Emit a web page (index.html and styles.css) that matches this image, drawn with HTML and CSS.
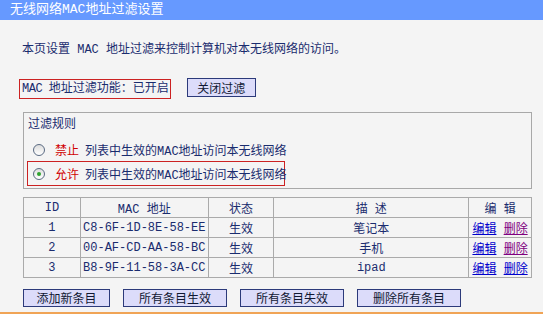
FILE: index.html
```html
<!DOCTYPE html>
<html lang="zh-CN">
<head>
  <meta charset="UTF-8">
  <title>无线网络MAC地址过滤设置</title>
  <link rel="stylesheet" href="styles.css">
</head>
<body>

  <!-- Title bar -->
  <div class="title">无线网络MAC地址过滤设置</div>

  <div class="content">
    <p class="intro">本页设置 MAC 地址过滤来控制计算机对本无线网络的访问。</p>

    <!-- Filter status -->
    <div class="status-row">
      <span class="status"><span class="latin">MAC </span>地址过滤功能：已开启</span>
      <button class="btn btn-toggle">关闭过滤</button>
    </div>

    <!-- Filter rules -->
    <div class="rules">
      <div class="rules-title">过滤规则</div>
      <div class="rule">
        <span class="radio"></span>
        <span class="rule-key">禁止</span>
        <span>列表中生效的MAC地址访问本无线网络</span>
      </div>
      <div class="rule rule-on">
        <span class="radio checked"></span>
        <span class="rule-key">允许</span>
        <span>列表中生效的MAC地址访问本无线网络</span>
      </div>
    </div>

    <!-- MAC list -->
    <table class="mac-table">
      <tr>
        <th class="col-id">ID</th>
        <th class="col-mac">MAC 地址</th>
        <th class="col-state">状态</th>
        <th class="col-desc">描 述</th>
        <th class="col-edit">编 辑</th>
      </tr>
      <tr>
        <td>1</td>
        <td>C8-6F-1D-8E-58-EE</td>
        <td>生效</td>
        <td>笔记本</td>
        <td><a href="#" class="link">编辑</a> <a href="#" class="link visited">删除</a></td>
      </tr>
      <tr>
        <td>2</td>
        <td>00-AF-CD-AA-58-BC</td>
        <td>生效</td>
        <td>手机</td>
        <td><a href="#" class="link">编辑</a> <a href="#" class="link visited">删除</a></td>
      </tr>
      <tr>
        <td>3</td>
        <td>B8-9F-11-58-3A-CC</td>
        <td>生效</td>
        <td>ipad</td>
        <td><a href="#" class="link">编辑</a> <a href="#" class="link">删除</a></td>
      </tr>
    </table>

    <!-- Actions -->
    <div class="actions">
      <button class="btn btn-add">添加新条目</button>
      <button class="btn btn-wide">所有条目生效</button>
      <button class="btn btn-wide">所有条目失效</button>
      <button class="btn btn-wide">删除所有条目</button>
    </div>
  </div>

  <div class="footer-line"></div>

</body>
</html>
```

FILE: styles.css
```css
/* Basic Reset */
* {
  margin: 0;
  padding: 0;
  box-sizing: border-box;
}

body {
  font-family: "Liberation Mono", "Noto Sans CJK SC", monospace;
  font-size: 12px;
  background-color: #f4f4f4;
  color: #1a2c6e;
}

/* Title bar */
.title {
  height: 20px;
  line-height: 20px;
  padding-left: 10px;
  background-color: #6699ff;
  color: #ffffff;
  font-size: 13px;
}

.content {
  padding: 0 11px 0 19px;
}

.intro {
  margin-top: 22px;
  padding-left: 3px;
  line-height: 16px;
}

/* Status row */
.status-row {
  display: flex;
  align-items: flex-start;
  margin-top: 20px;
}

.status {
  margin-top: 1px;
  height: 20px;
  line-height: 18px;
  padding: 0 1px 0 2px;
  border: 1px solid #cc2222;
  white-space: nowrap;
}

.status .latin {
  letter-spacing: -0.5px;
}

.btn {
  font-family: "Noto Sans CJK SC", sans-serif;
  font-size: 12px;
  color: #111833;
  background-color: #dcdcfa;
  border: 1px solid #2c3a7a;
  height: 18px;
  line-height: 16px;
  cursor: pointer;
}

.btn-toggle {
  margin-left: 16px;
  width: 69px;
  height: 19px;
}

/* Rules box */
.rules {
  margin: 13px 0 0 4px;
  border: 1px solid #a8a8a8;
  padding: 4px 0 2px 0;
}

.rules-title {
  line-height: 16px;
  padding-left: 4px;
}

.rule {
  display: flex;
  align-items: center;
  width: 258px;
  height: 22px;
  margin: 6px 0 0 3px;
  padding-left: 5px;
  border: 1px solid transparent;
  white-space: nowrap;
}

.rule-on {
  height: 25px;
  margin-top: 0;
  border-color: #cc2222;
}

.radio {
  width: 12px;
  height: 12px;
  border-radius: 50%;
  border: 1px solid #5a6a82;
  background: linear-gradient(#dcdcdc, #ffffff);
  margin-right: 10px;
  position: relative;
  flex-shrink: 0;
}

.radio.checked::after {
  content: "";
  position: absolute;
  left: 3px;
  top: 3px;
  width: 4px;
  height: 4px;
  border-radius: 50%;
  background-color: #2fa32f;
}

.rule-key {
  color: #d00000;
  margin-right: 6px;
}

/* MAC table */
.mac-table {
  margin: 8px 0 0 4px;
  width: 509px;
  border-collapse: collapse;
  text-align: center;
}

.mac-table th,
.mac-table td {
  height: 20px;
  border: 1px solid #aaaaaa;
  font-weight: normal;
  padding: 0;
}

.col-id { width: 57px; }
.col-mac { width: 128px; }
.col-state { width: 66px; }
.col-desc { width: 195px; }
.col-edit { width: 63px; }

.link {
  color: #0000cc;
  text-decoration: underline;
}

.link.visited {
  color: #800080;
}

/* Actions */
.actions {
  display: flex;
  gap: 13px;
  margin: 11px 0 0 4px;
}

.btn-add { width: 87px; }
.btn-wide { width: 104px; }

.footer-line {
  margin-top: 5px;
  height: 2px;
  background-color: #f0a456;
}
```
